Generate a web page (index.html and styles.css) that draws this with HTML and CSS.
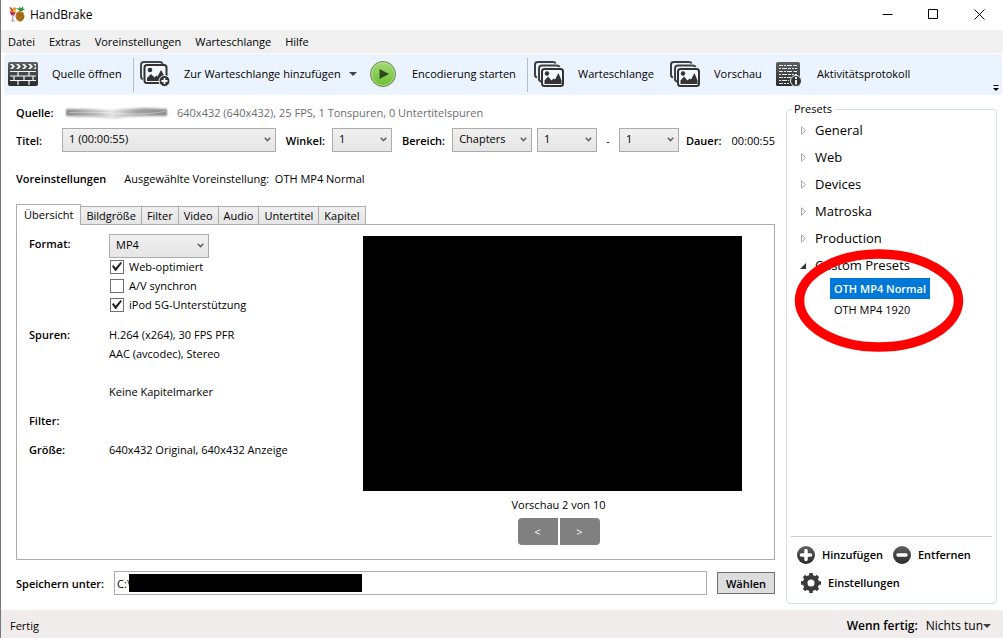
FILE: index.html
```html
<!DOCTYPE html>
<html lang="de">
<head>
<meta charset="utf-8">
<title>HandBrake</title>
<link rel="stylesheet" href="styles.css">
</head>
<body>
<svg class="defs" aria-hidden="true">
  <defs>
    <linearGradient id="dark" x1="0" y1="0" x2="0" y2="1"><stop offset="0" stop-color="#606060"/><stop offset="1" stop-color="#2b2b2b"/></linearGradient>
    <linearGradient id="green" x1="0" y1="0" x2="0" y2="1"><stop offset="0" stop-color="#a3d977"/><stop offset="1" stop-color="#6cc030"/></linearGradient>
    <symbol id="chevron" viewBox="0 0 7 5"><path d="M.7.8 3.5 3.6 6.3.8" fill="none" stroke="#606060" stroke-width="1.5"/></symbol>
    <symbol id="stack" viewBox="0 0 30 26">
      <path d="M3 16.500Q1 16 1 14V3.500Q1 1 3.500 1H19Q21 1 21.500 2.500M7 20.500Q5 20 5 18V7.500Q5 4.500 8 4.500H22.500Q25 4.500 25.500 6" fill="none" stroke="#404040" stroke-width="2"/>
      <rect x="8" y="8" width="21" height="17" rx="2.500" fill="#f3f8fe" stroke="#333" stroke-width="2"/>
      <circle cx="13" cy="12.500" r="2.200" fill="#333"/>
      <path d="M10.500 23v-3.500l3.500-4 3.500 4 2-2 1.500 1 3.500-6.500 3 7.500V23z" fill="#333"/>
    </symbol>
  </defs>
</svg>
<header class="titlebar">
  <svg class="logo" viewBox="0 0 16 16" width="16" height="16" aria-hidden="true">
    <path d="M.5 4.500 7 5.500 5 10 2 9z" fill="#d8323a"/><path d="M1 4 7 5 6.500 6.500.8 5.500z" fill="#f2b632"/>
    <path d="M4 9.500 3.500 14.500M2 15h4" stroke="#9aa0aa" stroke-width="1.200"/>
    <path d="M1 1.500 4 5" stroke="#c33" stroke-width="1.500"/><circle cx="5.500" cy="3" r="1.800" fill="#e79a25"/><circle cx="3.200" cy="7" r="1.300" fill="#7d2f91"/>
    <ellipse cx="11" cy="10.300" rx="4.500" ry="5.300" fill="#b97a1c"/><path d="m8 8 6 5m-6-2 4 4m-3-8 6 4M14 7l-6 5m7-1-5 4" stroke="#80520f" stroke-width=".7"/>
    <path d="m11 5-4-3 3 .5.5-2 1.500 2L14 0v2.500l2 .5-3 2z" fill="#26963a"/>
  </svg>
  <h1 class="app-name">HandBrake</h1>
  <div class="window-controls">
    <button aria-label="Minimieren"><svg viewBox="0 0 11 11" width="11" height="11"><path d="M.5 5.500h10"/></svg></button>
    <button aria-label="Maximieren"><svg viewBox="0 0 11 11" width="11" height="11"><path d="M.5.5h9v9h-9z"/></svg></button>
    <button aria-label="Schließen"><svg viewBox="0 0 11 11" width="11" height="11"><path d="m.5.5 10 10m0-10-10 10"/></svg></button>
  </div>
</header>
<nav class="menubar">
  <button>Datei</button><button>Extras</button><button>Voreinstellungen</button><button>Warteschlange</button><button>Hilfe</button>
</nav>
<div class="toolbar" role="toolbar">
  <button class="tool tool-source">
    <svg viewBox="0 0 30 26" width="30" height="26"><rect y="1" width="30" height="24" rx="2" fill="url(#dark)"/>
      <path d="m2 3 2.500 2.500L2 8h2.500L7 5.500 4.500 3zm6 0 2.500 2.500L8 8h2.500L13 5.500 10.500 3zm6 0 2.500 2.500L14 8h2.500L19 5.500 16.500 3zm6 0 2.500 2.500L20 8h2.500L25 5.500 22.500 3zm5.500 0L28 5.500 25.500 8H28V3z" fill="#f2f7fd"/>
      <path d="M2 10.500h26M2 15h26M2 19.500h26M10 11v4m11-4v4M6 15v4.500m10-4.500v4.500m9-4.500v4.500M10 20v4m11-4v4" stroke="#f2f7fd" stroke-width="1.200"/></svg>
    Quelle öffnen</button>
  <span class="separator"></span>
  <button class="tool tool-add">
    <svg viewBox="0 0 30 26" width="30" height="26">
      <path d="M3 18Q1 18 1 15V4Q1 1 4 1H20Q22 1 22.500 3" fill="none" stroke="#484848" stroke-width="2"/>
      <rect x="4.500" y="4" width="22" height="18" rx="2.500" fill="#f3f8fe" stroke="#333" stroke-width="2"/>
      <circle cx="10" cy="9" r="2.300" fill="#333"/><path d="M7 20v-3l4-4 3.500 3.500 2-2 1 1L21 9l4 7v4z" fill="#333"/>
      <circle cx="24.500" cy="20" r="5.500" fill="#333" stroke="#ecf4fe"/><path d="M24.500 17v6m-3-3h6" stroke="#fff" stroke-width="1.800"/></svg>
    Zur Warteschlange hinzufügen
    <svg class="caret" viewBox="0 0 8 4" width="8" height="4"><path d="M0 0h8L4 4z" fill="#404040"/></svg></button>
  <button class="tool tool-start">
    <svg viewBox="0 0 26 26" width="26" height="26"><circle cx="13" cy="13" r="12.500" fill="url(#green)" stroke="#777f72"/><circle cx="13" cy="13" r="11.300" fill="none" stroke="#b5e48d" stroke-width=".8"/><path d="m9.500 8 9.500 5-9.500 5z" fill="#2e4a1f"/></svg>
    Encodierung starten</button>
  <span class="separator"></span>
  <button class="tool tool-queue"><svg width="30" height="26"><use href="#stack"/></svg>Warteschlange</button>
  <button class="tool tool-preview"><svg width="30" height="26"><use href="#stack"/></svg>Vorschau</button>
  <button class="tool tool-log">
    <svg viewBox="0 0 26 26" width="26" height="26"><rect y="1" width="24" height="24" rx="1.500" fill="url(#dark)"/>
      <path d="M3 4.500h18M3 10.500h18M3 16.500h12M3 22.500h10" stroke="#e6edf4" stroke-dasharray="4 1 2 1 5 1.500"/>
      <path d="M3 7.500h18M3 13.500h18M3 19.500h10" stroke="#e6edf4" stroke-dasharray="2 1 5 1 3 1"/>
      <circle cx="20" cy="20" r="5.500" fill="#333" stroke="#ecf4fe"/><path d="M20 16v2m0 1v4.500" stroke="#fff" stroke-width="1.800"/></svg>
    Aktivitätsprotokoll</button>
  <svg class="overflow" viewBox="0 0 6 6" width="6" height="6" aria-hidden="true"><path d="M.5.5h5" stroke="#000"/><path d="M0 3h6L3 6z"/></svg>
</div>
<main class="content">
  <section class="workspace">
    <div class="row source-row"><b class="row-label">Quelle:</b>
      <svg class="smudge" viewBox="0 0 105 14" width="105" height="14" aria-hidden="true">
        <defs><linearGradient id="smear"><stop offset="0" stop-color="#888"/><stop offset=".3" stop-color="#bbb"/><stop offset=".45" stop-color="#e3e3e3"/><stop offset=".7" stop-color="#a5a5a5"/><stop offset="1" stop-color="#888"/></linearGradient><filter id="soft"><feGaussianBlur stdDeviation="1"/></filter></defs>
        <path d="M1 3 20 3 42 4 60 3 80 2 102 3 102 10 80 10 60 11 50 13 30 11 1 10z" fill="url(#smear)" filter="url(#soft)"/>
        <path d="M4 6.500q30-1 50 1t46-2" stroke="#fff" opacity=".4" fill="none"/></svg>
      <span class="muted">640x432 (640x432), 25 FPS, 1 Tonspuren, 0 Untertitelspuren</span></div>
    <div class="row title-row">
      <label class="row-label" for="title">Titel:</label>
      <span class="combo combo-title"><select id="title"><option>1 (00:00:55)</option></select><svg width="7" height="5"><use href="#chevron"/></svg></span>
      <label for="angle">Winkel:</label>
      <span class="combo combo-small"><select id="angle"><option>1</option></select><svg width="7" height="5"><use href="#chevron"/></svg></span>
      <label for="range">Bereich:</label>
      <span class="combo combo-range"><select id="range"><option>Chapters</option></select><svg width="7" height="5"><use href="#chevron"/></svg></span>
      <span class="combo combo-small"><select aria-label="Von"><option>1</option></select><svg width="7" height="5"><use href="#chevron"/></svg></span>
      <span class="dash">-</span>
      <span class="combo combo-small"><select aria-label="Bis"><option>1</option></select><svg width="7" height="5"><use href="#chevron"/></svg></span>
      <b class="duration">Dauer:</b><span>00:00:55</span>
    </div>
    <div class="row preset-row"><b>Voreinstellungen</b><span>Ausgewählte Voreinstellung:&nbsp; OTH MP4 Normal</span></div>
    <div class="tabs" role="tablist">
      <button class="tab active" role="tab" aria-selected="true">Übersicht</button><button class="tab" role="tab">Bildgröße</button><button class="tab" role="tab">Filter</button><button class="tab" role="tab">Video</button><button class="tab" role="tab">Audio</button><button class="tab" role="tab">Untertitel</button><button class="tab" role="tab">Kapitel</button>
    </div>
    <div class="panel" role="tabpanel">
      <div class="summary">
        <label class="term" for="format">Format:</label>
        <div class="format">
          <span class="combo combo-format"><select id="format"><option>MP4</option></select><svg width="7" height="5"><use href="#chevron"/></svg></span>
          <label class="check"><input type="checkbox" checked>Web-optimiert</label>
          <label class="check"><input type="checkbox">A/V synchron</label>
          <label class="check"><input type="checkbox" checked>iPod 5G-Unterstützung</label>
        </div>
        <b class="term">Spuren:</b><div>H.264 (x264), 30 FPS PFR<br>AAC (avcodec), Stereo<br><br>Keine Kapitelmarker</div>
        <b class="term">Filter:</b><div></div>
        <b class="term">Größe:</b><div>640x432 Original, 640x432 Anzeige</div>
      </div>
      <div class="preview">
        <div class="screen"></div>
        <p class="caption">Vorschau 2 von 10</p>
        <div class="pager"><button aria-label="Zurück">&lt;</button><button aria-label="Weiter">&gt;</button></div>
      </div>
    </div>
    <div class="save-row">
      <label for="path">Speichern unter:</label>
      <span class="path"><input id="path" type="text" value="C:\"><span class="redacted"></span></span>
      <button class="browse">Wählen</button>
    </div>
  </section>
  <fieldset class="presets">
    <legend>Presets</legend>
    <ul class="tree">
      <li><svg class="arrow" viewBox="0 0 5 9" width="5" height="9"><path d="M.5.8v7.400l4-3.700z"/></svg>General</li>
      <li><svg class="arrow" viewBox="0 0 5 9" width="5" height="9"><path d="M.5.8v7.400l4-3.700z"/></svg>Web</li>
      <li><svg class="arrow" viewBox="0 0 5 9" width="5" height="9"><path d="M.5.8v7.400l4-3.700z"/></svg>Devices</li>
      <li><svg class="arrow" viewBox="0 0 5 9" width="5" height="9"><path d="M.5.8v7.400l4-3.700z"/></svg>Matroska</li>
      <li><svg class="arrow" viewBox="0 0 5 9" width="5" height="9"><path d="M.5.8v7.400l4-3.700z"/></svg>Production</li>
      <li class="open"><svg class="arrow-open" viewBox="0 0 6 6" width="6" height="6"><path d="M6 0v6H0z" fill="#333"/></svg>Custom Presets</li>
    </ul>
    <div class="custom">
      <button class="preset selected">OTH MP4 Normal</button>
      <button class="preset">OTH MP4 1920</button>
      <svg class="marker" viewBox="0 0 170 103" width="170" height="103" aria-hidden="true"><ellipse cx="85" cy="51.500" rx="79.500" ry="46.500" fill="none" stroke="#fe0000" stroke-width="9.500"/></svg>
    </div>
    <div class="actions">
      <button><svg viewBox="0 0 18 18" width="18" height="18"><circle cx="9" cy="9" r="9" fill="url(#dark)"/><path d="M9 4.500v9M4.500 9h9" stroke="#fff" stroke-width="3.500" stroke-linecap="round"/></svg>Hinzufügen</button>
      <button><svg viewBox="0 0 18 18" width="18" height="18"><circle cx="9" cy="9" r="9" fill="url(#dark)"/><path d="M5 9h8" stroke="#fff" stroke-width="3.500" stroke-linecap="round"/></svg>Entfernen</button>
      <button class="settings"><svg viewBox="0 0 20 20" width="20" height="20"><circle cx="10" cy="10" r="5.800" fill="none" stroke="#3a3a3a" stroke-width="4.600"/><path d="M10 0v4m0 12v4M0 10h4m12 0h4M3 3l3 3m8 8 3 3M17 3l-3 3m-8 8-3 3" stroke="#3a3a3a" stroke-width="3.600"/></svg>Einstellungen</button>
    </div>
  </fieldset>
</main>
<footer class="statusbar">
  <span>Fertig</span>
  <div class="when-done"><b>Wenn fertig:</b><button>Nichts tun<svg viewBox="0 0 8 4" width="8" height="4"><path d="M0 0h8L4 4z" fill="#404040"/></svg></button></div>
</footer>
</body>
</html>
```

FILE: styles.css
```css
* { box-sizing: border-box; }
body {
  margin: 0;
  min-height: 100vh;
  display: flex;
  flex-direction: column;
  border-left: 1px solid #777;
  background: #fff;
  color: #000;
  font: 11px/19px "Open Sans", "Noto Sans", sans-serif;
}
button, select, input { font: inherit; color: inherit; }
button { padding: 0; border: 0; background: none; white-space: nowrap; }
svg { flex: none; }
.defs { position: absolute; width: 0; height: 0; }

.titlebar { display: flex; align-items: center; height: 30px; padding: 0 1px 2px 8px; gap: 5px; }
.app-name { margin: 0; font-size: 12px; font-weight: 400; }
.window-controls { display: flex; margin-left: auto; }
.window-controls button { width: 46px; height: 28px; display: grid; place-items: center; }
.window-controls path { fill: none; stroke: #000; }

.menubar { display: flex; gap: 14px; height: 23px; padding: 0 7px; background: #f0f0f0; }

.toolbar { display: flex; align-items: center; height: 41px; margin: 1px 1px 0 3px; background: #ebf4fe; border-radius: 3px; }
.tool { display: flex; align-items: center; gap: 14px; height: 38px; padding: 0 0 2px 4px; }
.tool-source { width: 129px; }
.tool-add { width: 232px; padding-left: 6px; }
.tool-add .caret { margin-left: -6px; }
.tool-start { width: 161px; gap: 16px; }
.tool-queue { width: 138px; padding-left: 6px; }
.tool-preview { width: 106px; }
.tool-log { gap: 15px; }
.separator { width: 1px; height: 34px; background: #b6bdc5; }
.overflow { align-self: flex-end; margin: 0 3px 4px auto; }

.content { flex: 1; display: flex; gap: 11px; padding: 0 6px 6px 15px; }
.workspace { flex: 1; display: flex; flex-direction: column; min-width: 0; }
.row { display: flex; align-items: center; white-space: nowrap; }
.row-label { width: 46px; flex: none; }
label, b { font-weight: 600; }
.source-row { height: 33px; padding-top: 2px; }
.smudge { margin: 0 7px 0 3px; }
.muted { color: #6d6d6d; }
.title-row { height: 24px; }
.title-row > label:not(.row-label) { margin: 0 7px 0 10px; }
.duration { margin: 0 10px 0 7px; }
.dash { width: 22px; text-align: center; }
.preset-row { height: 19px; margin: 17px 0 16px; gap: 18px; }

.combo { display: grid; align-items: center; height: 24px; }
.combo select {
  grid-area: 1 / 1;
  width: 100%;
  height: 100%;
  padding: 0 6px 3px;
  appearance: none;
  border: 1px solid #acacac;
  border-radius: 0;
  background: linear-gradient(#f0f0f0, #e5e5e5);
}
.combo svg { grid-area: 1 / 1; justify-self: end; margin: 0 5px 2px 0; pointer-events: none; }
.combo-title { width: 214px; }
.combo-small { width: 60px; }
.combo-range { width: 80px; margin-right: 5px; }
.combo-format { width: 100px; height: 22px; margin-bottom: 1px; }

.tabs { display: flex; align-items: flex-end; height: 20px; }
.tab { height: 18px; padding: 0 5px; border: 1px solid #acacac; border-left-width: 0; border-bottom: 0; background: linear-gradient(#f0f0f0, #e5e5e5); line-height: 17px; }
.tab.active { z-index: 1; height: 21px; margin-bottom: -1px; padding: 0 7px 2px; border-left-width: 1px; background: #fff; }
.panel { flex: 1; display: flex; justify-content: space-between; padding: 9px 32px 14px 12px; border: 1px solid #acacac; }
.summary { display: grid; grid-template-columns: 80px auto; row-gap: 10px; align-content: start; }
.summary > div { min-height: 19px; }
.format { padding-bottom: 1px; }
.check { display: flex; align-items: center; gap: 5px; height: 19px; font-weight: 400; }
.check input { appearance: none; width: 14px; height: 14px; margin: 0 0 0 1px; border: 1px solid #707070; background: #fff; display: grid; place-items: center; }
.check input:checked::before { content: ""; width: 10px; height: 9px; background: #212121; clip-path: polygon(0 48%, 14% 34%, 36% 64%, 86% 0, 100% 12%, 40% 100%, 32% 100%); }
.preview { flex: 0 1 379px; margin-top: 2px; }
.screen { aspect-ratio: 379 / 255; background: #000; }
.caption { margin: 4px 0; text-align: center; padding-left: 12px; }
.pager { display: flex; justify-content: center; gap: 2px; padding-left: 12px; }
.pager button { width: 40px; height: 27px; background: #808080; color: #fff; }
.pager button:first-child { border-radius: 4px 0 0 4px; }
.pager button:last-child { border-radius: 0 4px 4px 0; }

.save-row { display: flex; align-items: center; gap: 10px; margin: 11px 0 9px; }
.path { position: relative; flex: 1; height: 24px; }
.path input { width: 100%; height: 100%; padding: 0 2px; border: 1px solid #abadb3; }
.redacted { position: absolute; left: 15px; top: 3px; width: 233px; height: 18px; background: #000; }
.browse { width: 58px; height: 22px; border: 1px solid #707070; background: #ddd; font-weight: 600; }

.presets { display: flex; flex-direction: column; width: 211px; margin: 5px 0 0; padding: 0 4px 11px; border: 1px solid #d5dfe5; border-radius: 4px; }
.presets legend { margin-left: 1px; padding: 0 2px; line-height: 18px; }
.tree { margin: -1px 0 0; padding: 0 0 0 10px; list-style: none; font-size: 13px; }
.tree li { display: flex; align-items: center; gap: 9px; height: 27px; }
.arrow path { fill: #fff; stroke: #a6a6a6; }
.arrow-open { margin: 0 0 0 -1px; }
.custom { position: relative; display: flex; flex-direction: column; align-items: flex-start; margin: -1px 0 0 39px; }
.preset { height: 21px; padding: 0 4px; }
.preset.selected { background: #0078d7; color: #fff; font-weight: 600; }
.marker { position: absolute; left: -36px; top: -29px; pointer-events: none; }
.actions { display: flex; flex-wrap: wrap; gap: 9px 10px; margin-top: auto; padding: 8px 0 0 6px; border-top: 1px solid #ccc; font-weight: 600; }
.actions button { display: flex; align-items: center; gap: 7px; height: 19px; }
.actions .settings { width: 100%; padding-left: 4px; }

.statusbar { display: flex; align-items: center; justify-content: space-between; height: 29px; padding: 2px 12px 0 9px; background: #f1ecec; }
.when-done { display: flex; gap: 8px; font-size: 12px; }
.when-done button { display: flex; align-items: center; }
```
